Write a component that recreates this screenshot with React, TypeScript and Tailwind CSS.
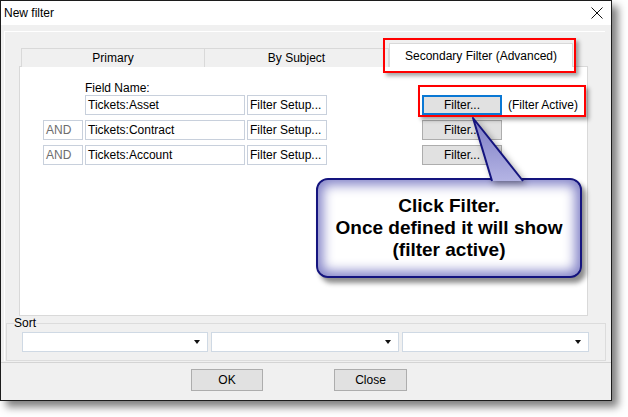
const font = { fontFamily: '"Liberation Sans", Arial, sans-serif' };

function Field({ text, muted, width }: { text: string; muted?: boolean; width: string }) {
  return (
    <div
      className={`${width} h-[20px] border border-[#c8d0dc] bg-white pl-[2px] text-[12px] leading-[18px] ${
        muted ? "text-[#6d6d6d]" : "text-black"
      }`}
    >
      {text}
    </div>
  );
}

function FilterButton({ focused }: { focused?: boolean }) {
  return (
    <div
      className={`ml-[93px] w-[80px] h-[20px] flex items-center justify-center bg-[#e1e1e1] text-[12px] text-black ${
        focused ? "border-2 border-[#0a78d4]" : "border border-[#adadad]"
      }`}
    >
      Filter...
    </div>
  );
}

function Combo({ width }: { width: string }) {
  return (
    <div className={`${width} h-[20px] border border-[#cfd9e4] bg-white flex items-center justify-end pr-[7px]`}>
      <svg width="6" height="4" viewBox="0 0 6 4">
        <path d="M0 0H6L3 4Z" fill="#111" />
      </svg>
    </div>
  );
}

export default function App() {
  const rows = [
    { and: false, name: "Tickets:Asset", focused: true },
    { and: true, name: "Tickets:Contract", focused: false },
    { and: true, name: "Tickets:Account", focused: false },
  ];
  return (
    <div className="relative w-[628px] h-[417px] bg-white overflow-hidden" style={font}>
      {/* dialog window */}
      <div className="w-[612px] h-[401px] border border-[#1c1c1c] bg-[#f0f0f0] flex flex-col shadow-[6px_6px_8px_rgba(0,0,0,0.5)]">
        <div className="h-[24px] bg-white flex items-center justify-between pl-[3px] pr-[8px] shrink-0">
          <span className="text-[12px] text-black">New filter</span>
          <svg width="12" height="12" viewBox="0 0 12 12">
            <path d="M0.5 0.5L11.5 11.5M11.5 0.5L0.5 11.5" stroke="#111" strokeWidth="1" />
          </svg>
        </div>

        {/* outer panel */}
        <div className="mt-[6px] ml-[3px] w-[601px] border-t border-l border-white flex flex-col">
          <div className="pl-[14px] pt-[11px]">
            {/* tabs */}
            <div className="h-[24px] flex items-end pl-[2px]">
              <div className="w-[184px] h-[19px] border border-b-0 border-[#d9d9d9] bg-[#f0f0f0] flex items-center justify-center text-[12px] text-black">
                Primary
              </div>
              <div className="w-[184px] h-[19px] border border-b-0 border-l-0 border-[#d9d9d9] bg-[#f0f0f0] flex items-center justify-center text-[12px] text-black">
                By Subject
              </div>
              <div className="relative z-10 w-[184px] h-[24px] border border-b-0 border-[#d9d9d9] bg-white flex items-center justify-center text-[12px] text-black">
                Secondary Filter (Advanced)
              </div>
            </div>
            {/* tab page */}
            <div className="-mt-px w-[569px] h-[250px] border border-[#d9d9d9] bg-white pl-[23px] pt-[14px]">
              <div className="ml-[42px] h-[14px] leading-[14px] text-[12px] text-black">Field Name:</div>
              <div className="flex flex-col gap-[5px]">
                {rows.map((r) => (
                  <div key={r.name} className="flex items-center gap-[2px]">
                    {r.and ? <Field text="AND" muted width="w-[40px]" /> : <div className="w-[40px] h-[20px]" />}
                    <Field text={r.name} width="w-[160px]" />
                    <Field text="Filter Setup..." width="w-[80px]" />
                    <FilterButton focused={r.focused} />
                    {r.focused && <span className="ml-[4px] text-[12px] text-black">(Filter Active)</span>}
                  </div>
                ))}
              </div>
            </div>
          </div>

          {/* sort group */}
          <div className="relative mt-[7px] ml-[1px] w-[600px] border border-[#dcdcdc] pt-[8px] pb-[8px] pl-[15px] flex gap-[3px]">
            <span className="absolute -top-[8px] left-[7px] bg-[#f0f0f0] text-[12px] leading-[14px] text-black">Sort</span>
            <Combo width="w-[186px]" />
            <Combo width="w-[188px]" />
            <Combo width="w-[187px]" />
          </div>
        </div>

        <div className="mt-px h-px bg-[#d4d4d4]" />

        <div className="mt-[6px] pl-[190px] flex gap-[71px]">
          <div className="w-[72px] h-[22px] border border-[#adadad] bg-[#e1e1e1] flex items-center justify-center text-[12px] text-black">
            OK
          </div>
          <div className="w-[73px] h-[22px] border border-[#adadad] bg-[#e1e1e1] flex items-center justify-center text-[12px] text-black">
            Close
          </div>
        </div>
      </div>

      {/* annotation highlight boxes */}
      <div className="absolute left-[383px] top-[38px] w-[193px] h-[35px] border-2 border-[#ff0000] shadow-[3px_3px_4px_rgba(0,0,0,0.35)]" />
      <div className="absolute left-[418px] top-[85px] w-[168px] h-[32px] border-2 border-[#ff0000] shadow-[3px_3px_4px_rgba(0,0,0,0.35)]" />

      {/* callout */}
      <div className="absolute left-[316px] top-[178px] w-[266px] h-[100px] rounded-[12px] border-2 border-[#14147e] bg-white shadow-[inset_0_0_12px_5px_#8484c8,4px_5px_5px_rgba(0,0,0,0.45)] flex flex-col items-center justify-center text-[19px] font-bold leading-[22px] text-black">
        <span>Click Filter.</span>
        <span>Once defined it will show</span>
        <span>(filter active)</span>
      </div>
      <svg
        className="absolute left-[460px] top-[110px] drop-shadow-[3px_3px_3px_rgba(0,0,0,0.35)]"
        width="80"
        height="76"
        viewBox="0 0 80 76"
      >
        <defs>
          <linearGradient id="ptr" x1="0" y1="0" x2="0" y2="1">
            <stop offset="0" stopColor="#7c7cc4" />
            <stop offset="1" stopColor="#b4b4e4" />
          </linearGradient>
        </defs>
        <path d="M13 8L32 71L63 71Z" fill="url(#ptr)" />
        <path d="M32 71L13 8L63 71" fill="none" stroke="#14147e" strokeWidth="2" strokeLinejoin="round" />
      </svg>
    </div>
  );
}
